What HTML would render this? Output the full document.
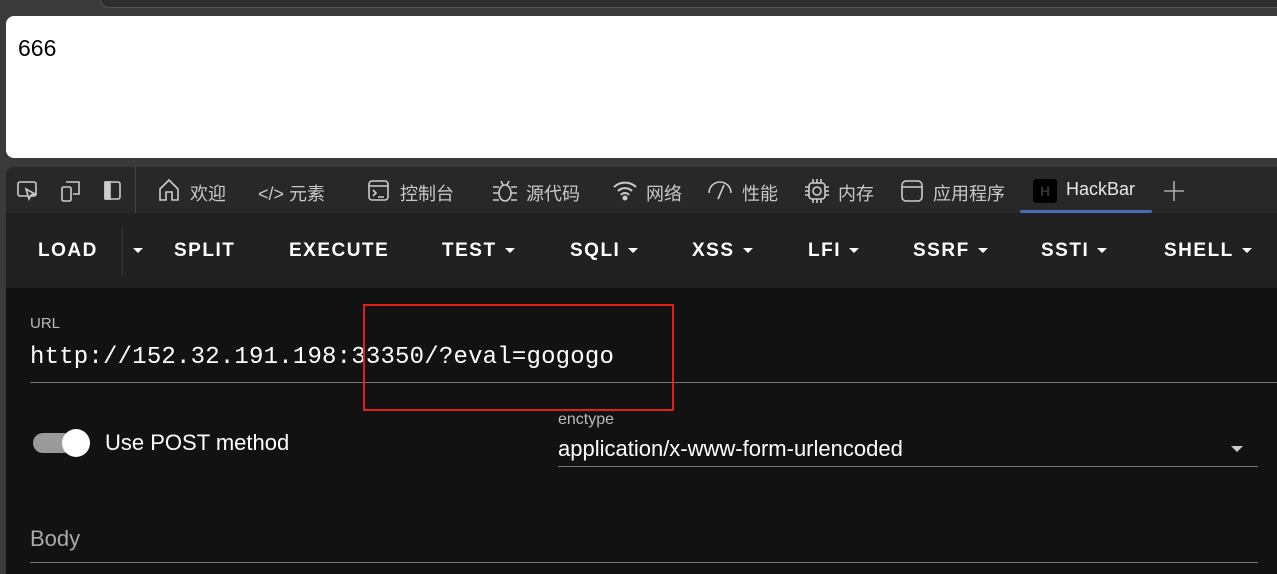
<!DOCTYPE html>
<html><head><meta charset="utf-8"><style>
*{margin:0;padding:0;box-sizing:border-box}
html,body{width:1277px;height:574px;overflow:hidden}
body{background:#3a3a3a;font-family:"Liberation Sans","Noto Sans CJK SC",sans-serif;position:relative}
.topline{position:absolute;left:100px;top:-10px;width:1300px;height:18px;border:1px solid #555;border-radius:10px;background:#2e2e2e}
.page{position:absolute;left:6px;top:16px;width:1290px;height:142px;background:#fff;border-radius:8px}
.page span{position:absolute;left:12px;top:19px;font-size:23px;color:#000}
.dev{position:absolute;left:6px;top:167px;width:1290px;height:407px;background:#121212;border-radius:8px 0 0 0;overflow:hidden}
.tabs{position:absolute;left:0;top:0;width:100%;height:46px;background:#282828;color:#c8c8c8;font-size:18px}
.t{position:absolute;top:13px;white-space:nowrap}
.tool{position:absolute;left:0;top:46px;width:100%;height:75px;background:#212121}
.b{position:absolute;top:27px;color:#fff;font-weight:bold;font-size:19px;letter-spacing:1.5px;white-space:nowrap}
.ar{display:inline-block;width:0;height:0;border-left:5px solid transparent;border-right:5px solid transparent;border-top:5px solid #fff;vertical-align:middle;margin-left:8px}
.lbl{position:absolute;color:#bbb}
</style></head><body>
<div class="topline"></div>
<div class="page"><span>666</span></div>
<div class="dev">
 <div class="tabs">
  <svg style="position:absolute;left:10px;top:12px" width="120" height="24" fill="none" stroke="#ccc" stroke-width="1.6">
   <rect x="2" y="3" width="18" height="14" rx="2"/><path d="M10 10l3 10 2-4 4-1z" fill="#282828"/>
   <rect x="46" y="8" width="9" height="14" rx="1.5"/><path d="M50 3h13v12h-6"/>
   <rect x="89" y="3" width="15" height="17" rx="2"/><rect x="89" y="3" width="5" height="17" fill="#ccc"/>
  </svg>
  <div style="position:absolute;left:129px;top:0;width:1px;height:46px;background:#444"></div>
  <svg style="position:absolute;left:151px;top:11px" width="24" height="24" fill="none" stroke="#ccc" stroke-width="1.6"><path d="M3 11l9-9 9 9v11h-6v-8h-6v8H3z"/></svg>
  <span class="t" style="left:184px">欢迎</span>
  <span class="t" style="left:252px">&lt;/&gt; 元素</span>
  <svg style="position:absolute;left:362px;top:13px" width="22" height="22" fill="none" stroke="#ccc" stroke-width="1.6"><rect x="1" y="1" width="19" height="19" rx="3"/><path d="M1 6h19M5 10l3 3-3 3M10 17h6"/></svg>
  <span class="t" style="left:394px">控制台</span>
  <svg style="position:absolute;left:486px;top:11px" width="26" height="26" fill="none" stroke="#ccc" stroke-width="1.6"><ellipse cx="13" cy="15" rx="6" ry="8"/><path d="M1 9h6M19 9h6M1 15h6M19 15h6M1 22h6M19 22h6M9 3l2 4M17 3l-2 4"/></svg>
  <span class="t" style="left:520px">源代码</span>
  <svg style="position:absolute;left:606px;top:12px" width="26" height="22" fill="none" stroke="#ccc" stroke-width="2"><path d="M2 8a16 16 0 0 1 22 0M6 12a10 10 0 0 1 14 0M9 16a5 5 0 0 1 8 0"/><circle cx="13" cy="19" r="1.5" fill="#ccc"/></svg>
  <span class="t" style="left:640px">网络</span>
  <svg style="position:absolute;left:700px;top:12px" width="28" height="22" fill="none" stroke="#ccc" stroke-width="1.6"><path d="M3 14a11 11 0 0 1 22 0M12 20l6-14"/></svg>
  <span class="t" style="left:736px">性能</span>
  <svg style="position:absolute;left:797px;top:10px" width="28" height="28" fill="none" stroke="#ccc" stroke-width="1.6"><rect x="6" y="6" width="16" height="16" rx="3"/><circle cx="14" cy="14" r="4"/><path d="M10 2v4M14 2v4M18 2v4M10 22v4M14 22v4M18 22v4M2 10h4M2 14h4M2 18h4M22 10h4M22 14h4M22 18h4"/></svg>
  <span class="t" style="left:832px">内存</span>
  <svg style="position:absolute;left:894px;top:12px" width="24" height="24" fill="none" stroke="#ccc" stroke-width="1.6"><rect x="2" y="2" width="20" height="20" rx="4"/><path d="M2 8h20"/></svg>
  <span class="t" style="left:927px">应用程序</span>
  <div style="position:absolute;left:1027px;top:12px;width:24px;height:24px;background:#000;border-radius:3px;color:#333;font-size:14px;font-weight:bold;text-align:center;line-height:24px">H</div>
  <span class="t" style="left:1060px;top:12px;color:#e8e8e8">HackBar</span>
  <div style="position:absolute;left:1014px;top:43px;width:132px;height:3px;background:#4a6ab5;border-radius:2px"></div>
  <svg style="position:absolute;left:1158px;top:14px" width="20" height="20" stroke="#aaa" stroke-width="1.6"><path d="M10 0v20M0 10h20"/></svg>
 </div>
 <div class="tool">
  <span class="b" style="left:32px">LOAD</span>
  <div style="position:absolute;left:116px;top:14px;width:1px;height:48px;background:#333"></div>
  <span class="b" style="left:119px"><span class="ar"></span></span>
  <span class="b" style="left:168px">SPLIT</span>
  <span class="b" style="left:283px">EXECUTE</span>
  <span class="b" style="left:436px">TEST<span class="ar"></span></span>
  <span class="b" style="left:564px">SQLI<span class="ar"></span></span>
  <span class="b" style="left:686px">XSS<span class="ar"></span></span>
  <span class="b" style="left:802px">LFI<span class="ar"></span></span>
  <span class="b" style="left:907px">SSRF<span class="ar"></span></span>
  <span class="b" style="left:1035px">SSTI<span class="ar"></span></span>
  <span class="b" style="left:1158px">SHELL<span class="ar"></span></span>
 </div>
 <span class="lbl" style="left:24px;top:148px;font-size:15px">URL</span>
 <div style="position:absolute;left:24px;top:177px;font-family:'Liberation Mono',monospace;font-size:24px;letter-spacing:0.2px;color:#fff;white-space:nowrap">http://152.32.191.198:33350/?eval=gogogo</div>
 <div style="position:absolute;left:24px;top:215px;width:1300px;height:1px;background:#777"></div>
 <div style="position:absolute;left:27px;top:266px;width:40px;height:20px;border-radius:10px;background:#9a9a9a"></div>
 <div style="position:absolute;left:56px;top:262px;width:28px;height:28px;border-radius:50%;background:#fff"></div>
 <span style="position:absolute;left:99px;top:263px;font-size:22px;color:#fff">Use POST method</span>
 <span class="lbl" style="left:552px;top:244px;font-size:16px">enctype</span>
 <span style="position:absolute;left:552px;top:269px;font-size:22px;color:#fff">application/x-www-form-urlencoded</span>
 <div style="position:absolute;left:1225px;top:279px;border-left:6px solid transparent;border-right:6px solid transparent;border-top:6px solid #ccc"></div>
 <div style="position:absolute;left:552px;top:299px;width:700px;height:1px;background:#777"></div>
 <span class="lbl" style="left:24px;top:359px;font-size:22px;color:#aaa">Body</span>
 <div style="position:absolute;left:24px;top:395px;width:1228px;height:1px;background:#777"></div>
</div>
<div style="position:absolute;left:363px;top:304px;width:311px;height:107px;border:2px solid #e02020"></div>
</body></html>
